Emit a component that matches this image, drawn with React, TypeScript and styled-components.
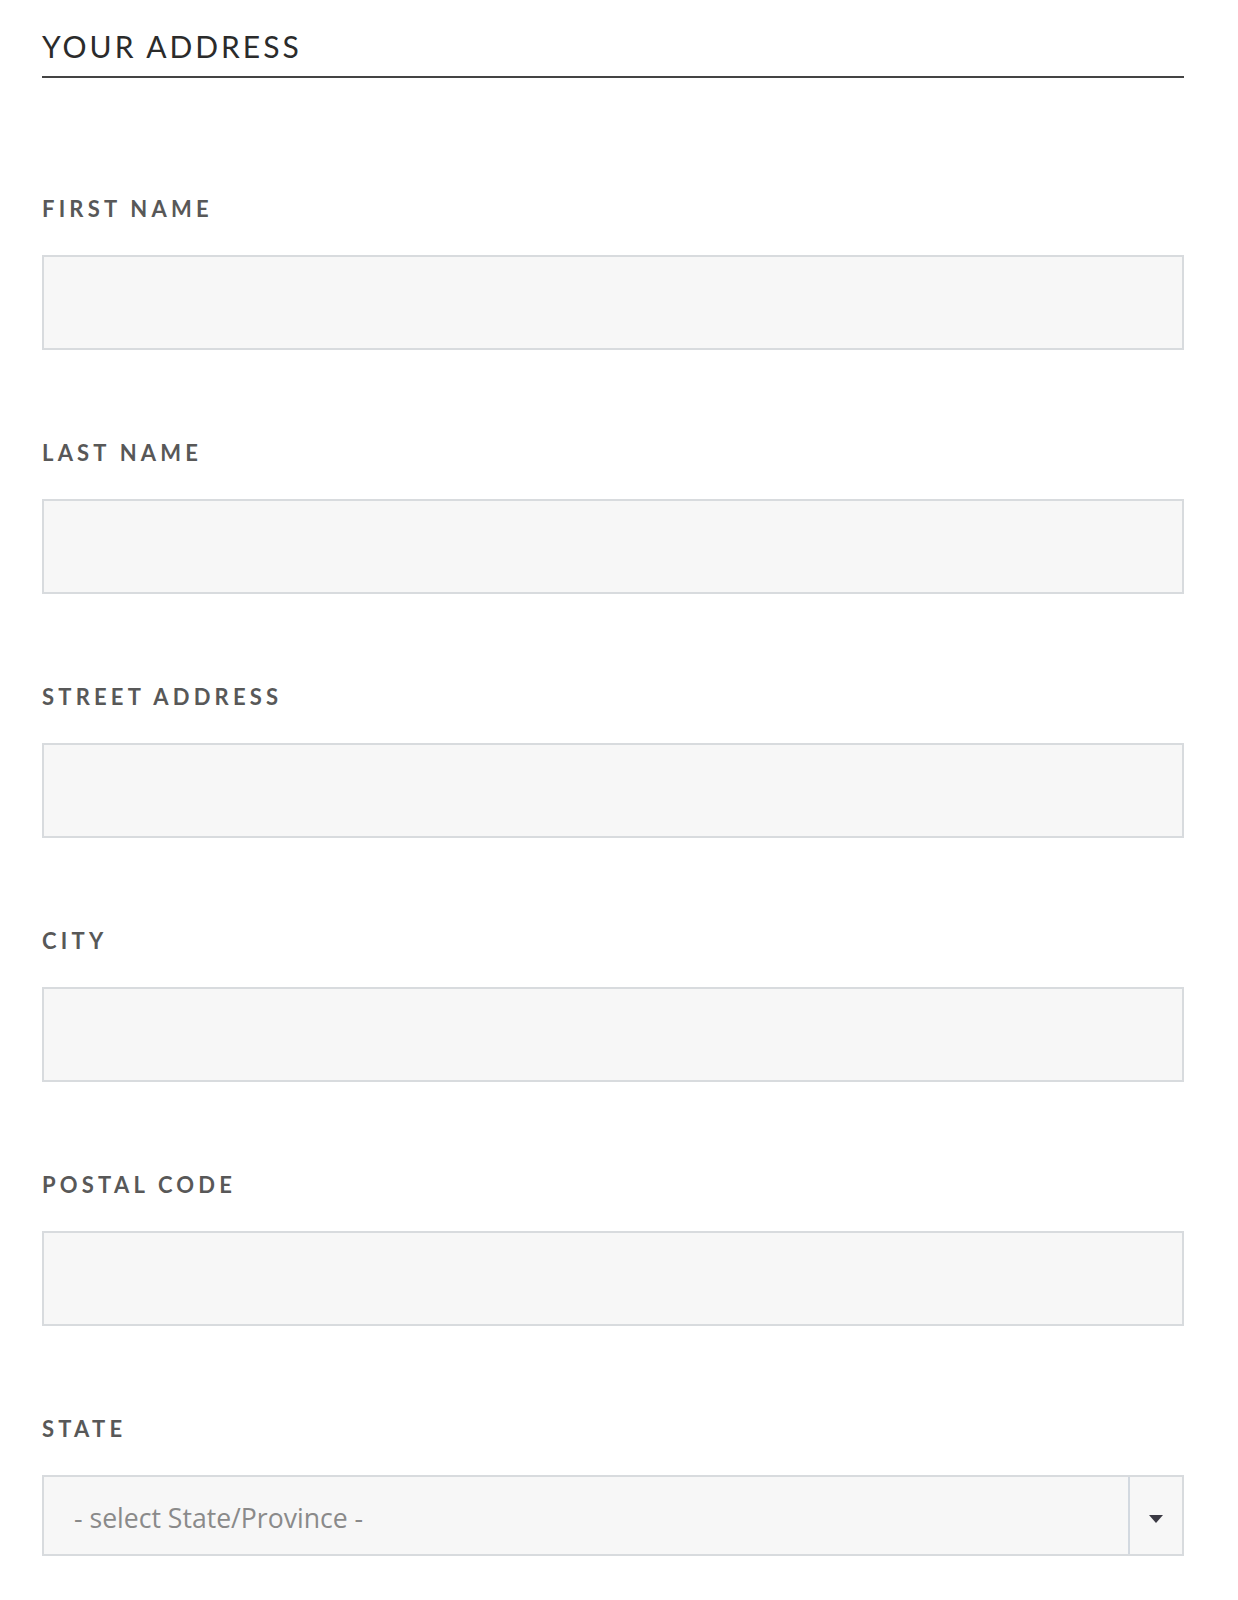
import React from "react";
import styled, { createGlobalStyle } from "styled-components";

const GlobalStyle = createGlobalStyle`
    body {
        margin: 0;
        background-color: #ffffff;
        font-family: "Lato", "Open Sans", sans-serif;
    }
`;

const FormWrapper = styled.div`
    width: 1142px;
    padding: 29px 0 40px 42px;
`;

const SectionTitle = styled.h2`
    margin: 0;
    padding-bottom: 13px;
    border-bottom: 2px solid #444444;
    font-size: 30px;
    line-height: 34px;
    font-weight: 400;
    letter-spacing: 3px;
    color: #2b2b2b;
`;

const FieldList = styled.div`
    display: flex;
    flex-direction: column;
    gap: 91px;
    margin-top: 119px;
`;

const Field = styled.div`
    display: flex;
    flex-direction: column;
    gap: 34px;
`;

const Label = styled.label`
    font-size: 22px;
    line-height: 24px;
    font-weight: 700;
    letter-spacing: 4.2px;
    color: #585858;
`;

const TextInput = styled.input`
    box-sizing: border-box;
    width: 100%;
    height: 95px;
    margin: 0;
    padding: 0 28px;
    border: 2px solid #d8dbde;
    background-color: #f7f7f7;
    outline: none;
    font-size: 24px;
`;

const SelectBox = styled.div`
    box-sizing: border-box;
    display: flex;
    align-items: stretch;
    width: 100%;
    height: 81px;
    border: 2px solid #d8dbde;
    background-color: #f7f7f7;
`;

const SelectValue = styled.div`
    flex-grow: 1;
    display: flex;
    align-items: center;
    padding: 4px 0 0 30px;
    font-family: "Open Sans", sans-serif;
    font-size: 26.6px;
    color: #8a8a8a;
`;

const SelectArrow = styled.div`
    width: 52px;
    display: flex;
    align-items: center;
    justify-content: center;
    padding-top: 6px;
    border-left: 2px solid #d3d9e0;
`;

const fields = ["FIRST NAME", "LAST NAME", "STREET ADDRESS", "CITY", "POSTAL CODE"];

const App = () => {
    return (
        <>
            <GlobalStyle/>
            <FormWrapper>
                <SectionTitle>YOUR ADDRESS</SectionTitle>
                <FieldList>
                    {fields.map((name) => (
                        <Field key={name}>
                            <Label>{name}</Label>
                            <TextInput type="text"/>
                        </Field>
                    ))}
                    <Field>
                        <Label>STATE</Label>
                        <SelectBox>
                            <SelectValue>- select State/Province -</SelectValue>
                            <SelectArrow>
                                <svg width="14" height="8" viewBox="0 0 14 8">
                                    <path d="M0 0 H14 L7 8 Z" fill="#3b3a44"/>
                                </svg>
                            </SelectArrow>
                        </SelectBox>
                    </Field>
                </FieldList>
            </FormWrapper>
        </>
    );
};

export default App;
